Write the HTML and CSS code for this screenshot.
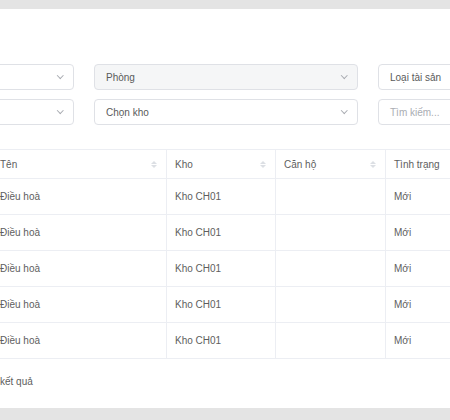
FILE: index.html
```html
<!DOCTYPE html>
<html lang="vi">
<head>
<meta charset="utf-8">
<link rel="stylesheet" href="styles.css">
</head>
<body>
<div class="viewport">
  <div class="card">
    <div class="filters">
      <div class="select"><span class="val">Chọn tòa nhà</span><span class="chev"></span></div>
      <div class="select disabled"><span class="val">Phòng</span><span class="chev"></span></div>
      <div class="select"><span class="val">Loại tài sản</span><span class="chev"></span></div>
      <div class="select"><span class="val">Chọn căn hộ</span><span class="chev"></span></div>
      <div class="select"><span class="val">Chọn kho</span><span class="chev"></span></div>
      <div class="select input"><span class="ph">Tìm kiếm...</span></div>
    </div>
    <table class="grid">
      <colgroup>
        <col class="c0"><col class="c1"><col class="c2"><col class="c3"><col class="c4">
      </colgroup>
      <thead>
        <tr>
          <th><span class="th">Mã tài sản<span class="sort"></span></span></th>
          <th><span class="th">Tên<span class="sort"></span></span></th>
          <th><span class="th">Kho<span class="sort"></span></span></th>
          <th><span class="th">Căn hộ<span class="sort"></span></span></th>
          <th><span class="th">Tình trạng<span class="sort"></span></span></th>
        </tr>
      </thead>
      <tbody>
        <tr><td>TS001</td><td>Điều hoà</td><td>Kho CH01</td><td></td><td>Mới</td></tr>
        <tr><td>TS002</td><td>Điều hoà</td><td>Kho CH01</td><td></td><td>Mới</td></tr>
        <tr><td>TS003</td><td>Điều hoà</td><td>Kho CH01</td><td></td><td>Mới</td></tr>
        <tr><td>TS004</td><td>Điều hoà</td><td>Kho CH01</td><td></td><td>Mới</td></tr>
        <tr><td>TS005</td><td>Điều hoà</td><td>Kho CH01</td><td></td><td>Mới</td></tr>
      </tbody>
    </table>
    <div class="footer"><span class="prefix">Tổng số 5</span><span class="summary">kết quả</span></div>
  </div>
</div>
</body>
</html>
```

FILE: styles.css
```css
html, body {
  margin: 0;
  padding: 0;
}
body {
  background: #e4e4e4;
  font-family: "Liberation Sans", Arial, sans-serif;
  font-size: 10px;
  color: #666;
}
.viewport {
  width: 450px;
  height: 420px;
  overflow: hidden;
  padding-top: 9px;
  box-sizing: border-box;
}
.card {
  background: #ffffff;
  height: 399px;
  width: 900px;
  margin-left: -210px;
  padding: 55px 20px 0 20px;
  box-sizing: border-box;
}
.filters {
  display: grid;
  grid-template-columns: 264px 264px 264px;
  column-gap: 20px;
  row-gap: 9px;
}
.select {
  height: 26px;
  border: 1px solid #dfe1e6;
  border-radius: 4px;
  box-sizing: border-box;
  display: flex;
  align-items: center;
  justify-content: space-between;
  padding: 0 9px 0 11px;
  background: #fff;
  color: #5a5a5a;
}
.select.disabled {
  background: #f5f6f7;
}
.ph {
  color: #aaadb3;
}
.chev {
  width: 3.5px;
  height: 3.5px;
  border-right: 1px solid #a8abb1;
  border-bottom: 1px solid #a8abb1;
  transform: rotate(45deg);
  margin-top: -3px;
  margin-right: 2px;
}
.grid {
  margin-top: 24px;
  border-collapse: collapse;
  table-layout: fixed;
  width: 860px;
}
.c0 { width: 181px; }
.c1 { width: 175px; }
.c2 { width: 109px; }
.c3 { width: 110px; }
.c4 { width: 285px; }
.grid th, .grid td {
  border: 1px solid #eceef3;
  padding: 0 8px;
  text-align: left;
  font-weight: normal;
  white-space: nowrap;
  overflow: hidden;
  color: #5e5e5e;
}
.grid th {
  height: 28px;
}
.grid td {
  height: 35px;
}
.th {
  display: flex;
  align-items: center;
  justify-content: space-between;
}
.sort {
  display: inline-flex;
  flex-direction: column;
  gap: 1px;
  margin-right: 1px;
}
.sort::before, .sort::after {
  content: "";
  width: 0;
  height: 0;
  border-left: 3px solid transparent;
  border-right: 3px solid transparent;
}
.sort::before {
  border-bottom: 3px solid #dcdfe4;
}
.sort::after {
  border-top: 3px solid #dcdfe4;
}
.footer {
  height: 44px;
  display: flex;
  align-items: center;
  color: #5e5e5e;
}
.prefix {
  width: 187px;
  text-align: right;
  margin-right: 3px;
}
```
